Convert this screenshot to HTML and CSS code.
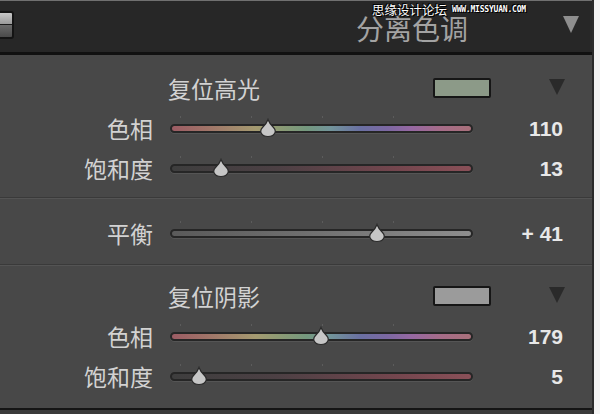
FILE: index.html
```html
<!DOCTYPE html>
<html lang="zh">
<head>
<meta charset="utf-8">
<link rel="stylesheet" href="styles.css">
</head>
<body>
<div class="app">
  <header class="top">
    <div class="toggle"><span class="toggle-on"></span><span class="toggle-off"></span></div>
    <h1 class="title">分离色调</h1>
    <span class="caret caret-light"></span>
    <div class="watermark"><span class="wm-cn">思缘设计论坛</span><span class="wm-en">WWW.MISSYUAN.COM</span></div>
  </header>
  <section class="panel">
    <div class="group group-high">
      <div class="head">
        <span class="head-title">复位高光</span>
        <span class="swatch swatch-high"></span>
        <span class="caret caret-dark"></span>
      </div>
      <div class="row">
        <span class="label">色相</span>
        <div class="track track-hue"><span class="thumb" style="left:32%"><svg viewBox="0 0 20 20" width="20" height="20"><path d="M10 1.5 C11 4.5 13 7 15.5 9.5 C19 13 17 18.5 10 18.5 C3 18.5 1 13 4.5 9.5 C7 7 9 4.5 10 1.5Z"/></svg></span></div>
        <span class="value">110</span>
      </div>
      <div class="row">
        <span class="label">饱和度</span>
        <div class="track track-sat"><span class="thumb" style="left:16.5%"><svg viewBox="0 0 20 20" width="20" height="20"><path d="M10 1.5 C11 4.5 13 7 15.5 9.5 C19 13 17 18.5 10 18.5 C3 18.5 1 13 4.5 9.5 C7 7 9 4.5 10 1.5Z"/></svg></span></div>
        <span class="value">13</span>
      </div>
    </div>
    <div class="group group-balance">
      <div class="row">
        <span class="label">平衡</span>
        <div class="track track-bal"><span class="thumb" style="left:68.6%"><svg viewBox="0 0 20 20" width="20" height="20"><path d="M10 1.5 C11 4.5 13 7 15.5 9.5 C19 13 17 18.5 10 18.5 C3 18.5 1 13 4.5 9.5 C7 7 9 4.5 10 1.5Z"/></svg></span></div>
        <span class="value">+ 41</span>
      </div>
    </div>
    <div class="group group-shadow">
      <div class="head">
        <span class="head-title">复位阴影</span>
        <span class="swatch swatch-shadow"></span>
        <span class="caret caret-dark"></span>
      </div>
      <div class="row">
        <span class="label">色相</span>
        <div class="track track-hue"><span class="thumb" style="left:49.8%"><svg viewBox="0 0 20 20" width="20" height="20"><path d="M10 1.5 C11 4.5 13 7 15.5 9.5 C19 13 17 18.5 10 18.5 C3 18.5 1 13 4.5 9.5 C7 7 9 4.5 10 1.5Z"/></svg></span></div>
        <span class="value">179</span>
      </div>
      <div class="row">
        <span class="label">饱和度</span>
        <div class="track track-sat"><span class="thumb" style="left:8.9%"><svg viewBox="0 0 20 20" width="20" height="20"><path d="M10 1.5 C11 4.5 13 7 15.5 9.5 C19 13 17 18.5 10 18.5 C3 18.5 1 13 4.5 9.5 C7 7 9 4.5 10 1.5Z"/></svg></span></div>
        <span class="value">5</span>
      </div>
    </div>
  </section>
  <div class="foot"></div>
</div>
</body>
</html>
```
FILE: styles.css
```css
* { box-sizing: border-box; margin: 0; padding: 0; }
html, body { width: 600px; height: 414px; overflow: hidden; }
body {
  background: #f3f3f3;
  font-family: "Noto Sans CJK SC", "Noto Sans", sans-serif;
}
.app {
  width: 594px;
  height: 414px;
  display: flex;
  flex-direction: column;
  border-right: 2px solid #2a2a2a;
}
.top {
  position: relative;
  height: 55px;
  flex: none;
  background: #272727;
  border-top: 1px solid #707070;
  border-bottom: 3px solid #111;
  display: flex;
  align-items: center;
}
.toggle {
  margin-left: -6px;
  margin-top: -4px;
  width: 20px;
  height: 28px;
  border: 2px solid #141414;
  border-radius: 3px;
  display: flex;
  flex-direction: column;
  overflow: hidden;
  background: #1a1a1a;
}
.toggle-on { flex: 1; background: linear-gradient(#c8c8c8, #9a9a9a); }
.toggle-off { flex: 1; background: linear-gradient(#6a6a6a, #4a4a4a); margin-top: 1px; }
.title {
  margin-left: auto;
  font-size: 28px;
  line-height: 0.85;
  font-weight: 400;
  color: #a3a3a3;
  margin-top: 5px;
}
.caret {
  width: 0; height: 0;
  border-left: 8px solid transparent;
  border-right: 8px solid transparent;
}
.caret-light {
  margin-left: 95px;
  margin-right: 13px;
  margin-top: -4px;
  border-top: 17px solid #8e8e8e;
}
.watermark {
  position: absolute;
  left: 372px;
  top: 3px;
  display: flex;
  align-items: center;
  gap: 5px;
  color: #fff;
  line-height: 1;
  text-shadow: 0 0 1px #000, 1px 1px 0 #000, -1px -1px 0 #000;
}
.wm-cn { font-size: 12.5px; line-height: 1; }
.wm-en { font-family: "DejaVu Sans Mono", monospace; font-size: 8px; font-weight: 700; letter-spacing: -0.2px; }

.panel {
  flex: none;
  height: 353px;
  background: #484848;
  display: flex;
  flex-direction: column;
}
.group-high { padding: 13px 0 9px; border-bottom: 1px solid #3a3a3a; }
.group-balance { padding: 14px 0 11px; border-top: 1px solid #545454; border-bottom: 1px solid #3a3a3a; }
.group-shadow { padding: 10px 0 0; border-top: 1px solid #545454; }

.head {
  height: 40px;
  display: flex;
  align-items: center;
  padding-left: 168px;
}
.head-title {
  width: 265px;
  font-size: 23px;
  line-height: 1;
  color: #d2d2d2;
}
.swatch {
  width: 58px;
  height: 20px;
  border: 2px solid #161616;
  border-radius: 2px;
}
.swatch-high { background: #8c9a88; }
.swatch-shadow { background: #9b9b9b; }
.caret-dark {
  margin-left: 58px;
  margin-top: -2px;
  border-top: 16px solid #2a2a2a;
}

.row {
  height: 40px;
  display: grid;
  grid-template-columns: 153px 303px 73px;
  column-gap: 17px;
  align-items: center;
}
.label {
  text-align: right;
  font-size: 23px;
  line-height: 1;
  color: #d2d2d2;
}
.value {
  text-align: right;
  font-family: "Liberation Sans", Arial, sans-serif;
  font-weight: 700;
  font-size: 21px;
  line-height: 1;
  color: #e8e8e8;
}
.track {
  position: relative;
  height: 9px;
  border: 2px solid #262626;
  border-radius: 5px;
  box-shadow: 0 1px 0 #555;
}
.track::before {
  content: "";
  position: absolute;
  left: 8px;
  right: 8px;
  top: -10px;
  height: 2px;
  background: repeating-linear-gradient(to right, #5c5c5c 0 1px, transparent 1px 71px);
}
.track-hue {
  background: linear-gradient(to right, #9c5c64 0%, #a07468 12%, #a49a70 28%, #8c9a74 36%, #74987e 45%, #72949a 53%, #6a70a2 63%, #7c68a2 72%, #9668a2 80%, #a66c88 90%, #a8707a 100%);
}
.track-sat {
  background: linear-gradient(to right, #3e3e3e 0%, #4c4044 35%, #74464e 75%, #8a5058 100%);
}
.track-bal {
  background: linear-gradient(to right, #5a5a5a 0%, #727272 50%, #8e8e8e 100%);
}
.thumb {
  position: absolute;
  top: -8px;
  width: 20px;
  height: 20px;
  margin-left: -10px;
}
.thumb svg { display: block; }
.thumb path { fill: #c6c6c6; stroke: #2a2a2a; stroke-width: 1.2; }

.foot {
  flex: 1;
  background: #3a3a3a;
  border-top: 2px solid #151515;
}
```
